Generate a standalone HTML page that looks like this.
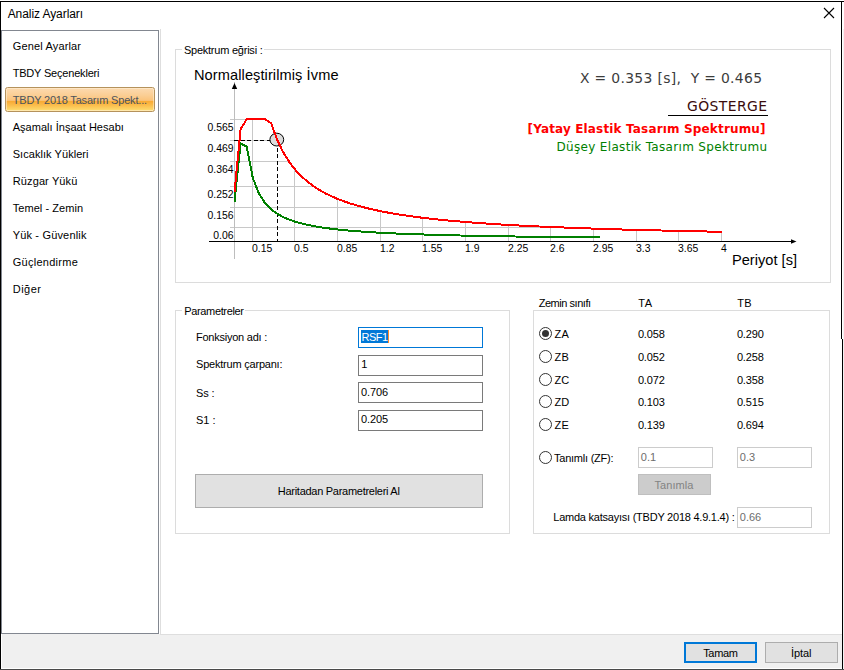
<!DOCTYPE html>
<html lang="tr">
<head>
<meta charset="utf-8">
<title>Analiz Ayarları</title>
<style>
html,body{margin:0;padding:0;}
body{width:844px;height:670px;overflow:hidden;background:#fff;position:relative;font-family:"Liberation Sans",Arial,sans-serif;font-size:11px;color:#000;}
.abs,.t,.sel,.radio,.inp,.btn,.gb,.gbt,.chart{position:absolute;box-sizing:border-box;}
.chart{left:0;top:0;}
.t{white-space:nowrap;line-height:14px;height:14px;font-size:11px;}
.gb{border:1px solid #dcdcdc;}
.gbt{background:#fff;height:14px;}
.sel{border:1px solid #b5925c;border-radius:2.5px;background:linear-gradient(#fcdab0 0%,#fbcf96 30%,#fbc37a 54%,#f9a932 57%,#fbbd4c 75%,#fdd566 92%,#ffe182 100%);box-shadow:inset 0 0 0 1px rgba(255,240,215,0.55);}
.inp{background:#fff;border:1px solid #7a7a7a;height:21px;}
.inp.dis{border-color:#cccccc;}
.btn{background:#e1e1e1;border:1px solid #adadad;}
.radio{left:539px;width:13px;height:13px;border:1px solid #333;border-radius:50%;background:#fff;}
.radio.on::after{content:"";position:absolute;left:2px;top:2px;width:7px;height:7px;border-radius:50%;background:#333;}
</style>
</head>
<body>
<!-- window frame -->
<div class="abs" style="left:0;top:1px;width:844px;height:1px;background:#000"></div>
<div class="abs" style="left:0;top:2px;width:1px;height:668px;background:#000"></div>
<div class="abs" style="left:841px;top:1px;width:1px;height:338px;background:#000"></div>
<div class="abs" style="left:842px;top:339px;width:1px;height:330px;background:#000"></div>
<div class="abs" style="left:843px;top:29px;width:1px;height:641px;background:#f2f2f2"></div>
<!-- bottom strip -->
<div class="abs" style="left:2px;top:634px;width:840px;height:34px;background:#f0f0f0"></div>
<div class="abs" style="left:1px;top:668px;width:841px;height:1px;background:#fff"></div>
<div class="abs" style="left:0;top:669px;width:844px;height:1px;background:#4a4a4a"></div>
<!-- title -->
<div class="t" style="left:7.7px;top:6.8px;font-size:12px;letter-spacing:-0.079px;">Analiz Ayarları</div>
<svg class="abs" style="left:823px;top:7px" width="12" height="12" viewBox="0 0 12 12"><path d="M1 1 L11 11 M11 1 L1 11" stroke="#000" stroke-width="1.1" fill="none"/></svg>
<!-- content panel faint border -->
<div class="abs" style="left:160px;top:29px;width:1px;height:606px;background:#dedede"></div>
<div class="abs" style="left:160px;top:634px;width:682px;height:1px;background:#dedede"></div>
<!-- list -->
<div class="abs" style="left:1px;top:30px;width:158px;height:604px;border:1px solid #828790;background:#fff"></div>
<div class="t" style="left:12.7px;top:38.8px;font-size:11px;letter-spacing:0.158px;">Genel Ayarlar</div>
<div class="t" style="left:12.7px;top:65.8px;font-size:11px;letter-spacing:-0.192px;">TBDY Seçenekleri</div>
<div class="sel" style="left:5px;top:87px;width:150px;height:25px"></div>
<div class="t" style="left:12.7px;top:92.8px;font-size:11px;letter-spacing:-0.184px;color:#4c535c;">TBDY 2018 Tasarım Spekt...</div>
<div class="t" style="left:12.7px;top:119.8px;font-size:11px;letter-spacing:0.025px;">Aşamalı İnşaat Hesabı</div>
<div class="t" style="left:12.7px;top:146.8px;font-size:11px;letter-spacing:0.057px;">Sıcaklık Yükleri</div>
<div class="t" style="left:12.7px;top:173.8px;font-size:11px;letter-spacing:0.128px;">Rüzgar Yükü</div>
<div class="t" style="left:12.7px;top:200.8px;font-size:11px;letter-spacing:0.063px;">Temel - Zemin</div>
<div class="t" style="left:12.7px;top:227.8px;font-size:11px;letter-spacing:0.169px;">Yük - Güvenlik</div>
<div class="t" style="left:12.7px;top:254.8px;font-size:11px;letter-spacing:0.276px;">Güçlendirme</div>
<div class="t" style="left:12.7px;top:281.8px;font-size:11px;letter-spacing:0.503px;">Diğer</div>
<!-- group: spektrum -->
<div class="gb" style="left:175px;top:49px;width:656px;height:234px"></div>
<div class="gbt" style="left:182px;top:42px;width:82px"></div>
<div class="t" style="left:183.9px;top:42.5px;font-size:11px;letter-spacing:-0.231px;">Spektrum eğrisi :</div>
<svg class="chart" width="844" height="670" viewBox="0 0 844 670">
<g stroke="#c8c8c8" stroke-width="1" shape-rendering="crispEdges"><line x1="252.5" y1="241" x2="252.5" y2="119.2"/><line x1="294.5" y1="241" x2="294.5" y2="170.1"/><line x1="337.5" y1="241" x2="337.5" y2="199.1"/><line x1="380.5" y1="241" x2="380.5" y2="211.2"/><line x1="422.5" y1="241" x2="422.5" y2="217.9"/><line x1="465.5" y1="241" x2="465.5" y2="222.0"/><line x1="508.5" y1="241" x2="508.5" y2="224.9"/><line x1="550.5" y1="241" x2="550.5" y2="227.0"/><line x1="593.5" y1="241" x2="593.5" y2="228.6"/><line x1="636.5" y1="241" x2="636.5" y2="229.9"/><line x1="678.5" y1="241" x2="678.5" y2="230.9"/><line x1="721.5" y1="241" x2="721.5" y2="231.8"/><line x1="230" y1="119.5" x2="265.0" y2="119.5"/><line x1="230" y1="140.5" x2="277.1" y2="140.5"/><line x1="230" y1="161.5" x2="289.4" y2="161.5"/><line x1="230" y1="186.5" x2="313.8" y2="186.5"/><line x1="230" y1="207.5" x2="362.7" y2="207.5"/><line x1="230" y1="227.5" x2="567.7" y2="227.5"/></g>
<line x1="234.5" y1="82" x2="234.5" y2="259" stroke="#bdbdbd" stroke-width="1" shape-rendering="crispEdges"/>
<path d="M234.5 83 L237.2 89 L231.8 89 Z" fill="#000"/>
<line x1="209" y1="241.5" x2="795" y2="241.5" stroke="#000" stroke-width="1" shape-rendering="crispEdges"/>
<path d="M796.5 241.5 L791 239.3 L791 243.7 Z" fill="#000"/>
<g stroke="#000" stroke-width="1" stroke-dasharray="4 2.5" shape-rendering="crispEdges"><line x1="234" y1="140.5" x2="270.5" y2="140.5"/><line x1="277.5" y1="147.6" x2="277.5" y2="241"/></g>
<ellipse cx="276.8" cy="139.6" rx="6.9" ry="6.4" fill="#dcdcdc" stroke="#000" stroke-width="1"/>
<polyline points="234.5,201.7 240.6,143.5 246.7,146.6 252.8,177.9 258.9,193.6 265.0,203.0 271.1,209.3 277.2,213.7 283.3,217.1 289.4,219.7 295.5,221.8 301.6,223.5 307.7,224.9 313.7,226.1 319.8,227.2 325.9,228.1 332.0,228.8 338.1,229.5 344.2,230.2 350.3,230.7 356.4,231.2 362.5,231.6 368.6,232.1 374.7,232.4 380.8,232.8 386.9,233.1 393.0,233.4 399.1,233.6 405.2,233.9 411.3,234.1 417.4,234.3 423.5,234.5 429.6,234.7 435.7,234.9 441.8,235.1 447.9,235.2 454.0,235.4 460.1,235.5 466.1,235.7 472.2,235.8 478.3,235.9 484.4,236.0 490.5,236.1 496.6,236.2 502.7,236.3 508.8,236.4 514.9,236.5 521.0,236.6 527.1,236.7 533.2,236.8 539.3,236.8 545.4,236.9 551.5,237.0 557.6,237.1 563.7,237.1 569.8,237.2 575.9,237.2 582.0,237.3 588.1,237.4 594.2,237.4 600.3,237.5" fill="none" stroke="#008000" stroke-width="2" stroke-linejoin="round" shape-rendering="crispEdges"/>
<polyline points="234.5,192.0 240.6,129.3 246.7,119.2 252.8,119.2 258.9,119.2 265.0,119.2 271.1,123.1 277.2,139.9 283.3,152.4 289.4,162.2 295.5,170.1 301.6,176.5 307.7,181.8 313.7,186.4 319.8,190.2 325.9,193.6 332.0,196.5 338.1,199.1 344.2,201.4 350.3,203.5 356.4,205.3 362.5,207.0 368.6,208.5 374.7,209.9 380.8,211.2 386.9,212.4 393.0,213.5 399.1,214.5 405.2,215.4 411.3,216.3 417.4,217.1 423.5,217.9 429.6,218.6 435.7,219.2 441.8,219.9 447.9,220.5 454.0,221.0 460.1,221.5 466.1,222.0 472.2,222.5 478.3,223.0 484.4,223.4 490.5,223.8 496.6,224.2 502.7,224.6 508.8,224.9 514.9,225.3 521.0,225.6 527.1,225.9 533.2,226.2 539.3,226.5 545.4,226.8 551.5,227.0 557.6,227.3 563.7,227.5 569.8,227.8 575.9,228.0 582.0,228.2 588.1,228.4 594.2,228.6 600.3,228.8 606.4,229.0 612.5,229.2 618.5,229.4 624.6,229.6 630.7,229.8 636.8,229.9 642.9,230.1 649.0,230.2 655.1,230.4 661.2,230.5 667.3,230.7 673.4,230.8 679.5,230.9 685.6,231.1 691.7,231.2 697.8,231.3 703.9,231.4 710.0,231.6 716.1,231.7 722.2,231.8" fill="none" stroke="#ff0000" stroke-width="2" stroke-linejoin="round" shape-rendering="crispEdges"/>
<g font-family="'Liberation Sans', Arial, sans-serif" font-size="10.4" fill="#000"><text x="233.5" y="130.6" text-anchor="end">0.565</text><text x="233.5" y="151.6" text-anchor="end">0.469</text><text x="233.5" y="172.6" text-anchor="end">0.364</text><text x="233.5" y="197.6" text-anchor="end">0.252</text><text x="233.5" y="218.6" text-anchor="end">0.156</text><text x="233.5" y="238.6" text-anchor="end">0.06</text><text x="252.0" y="251.5">0.15</text><text x="294.0" y="251.5">0.5</text><text x="337.0" y="251.5">0.85</text><text x="380.0" y="251.5">1.2</text><text x="422.0" y="251.5">1.55</text><text x="465.0" y="251.5">1.9</text><text x="508.0" y="251.5">2.25</text><text x="550.0" y="251.5">2.6</text><text x="593.0" y="251.5">2.95</text><text x="636.0" y="251.5">3.3</text><text x="678.0" y="251.5">3.65</text><text x="721.0" y="251.5">4</text></g>
<text x="194" y="80" font-family="'Liberation Sans', Arial, sans-serif" font-size="14.6" fill="#000" textLength="144.5" lengthAdjust="spacing">Normalleştirilmiş İvme</text>
<text x="732" y="265" font-family="'Liberation Sans', Arial, sans-serif" font-size="14.6" fill="#000" textLength="65" lengthAdjust="spacing">Periyot [s]</text>
<text x="580" y="83" font-family="'DejaVu Sans', Verdana, sans-serif" font-size="13.9" fill="#3c3c3c" xml:space="preserve" style="white-space:pre" textLength="182" lengthAdjust="spacing">X = 0.353 [s],  Y = 0.465</text>
<text x="687" y="111" font-family="'DejaVu Sans', Verdana, sans-serif" font-size="13.9" fill="#3a0c0c" textLength="80" lengthAdjust="spacing">GÖSTERGE</text>
<line x1="668" y1="115.5" x2="768" y2="115.5" stroke="#000" stroke-width="1" shape-rendering="crispEdges"/>
<text x="527.5" y="133" font-family="'DejaVu Sans', Verdana, sans-serif" font-weight="bold" font-size="12" fill="#ff0000" textLength="238" lengthAdjust="spacing">[Yatay Elastik Tasarım Spektrumu]</text>
<text x="556.5" y="151" font-family="'DejaVu Sans', Verdana, sans-serif" font-size="12" fill="#008000" textLength="210.5" lengthAdjust="spacing">Düşey Elastik Tasarım Spektrumu</text>
</svg>
<!-- group: parametreler -->
<div class="gb" style="left:175px;top:310px;width:335px;height:224px"></div>
<div class="gbt" style="left:182px;top:303px;width:63px"></div>
<div class="t" style="left:184.3px;top:303.5px;font-size:11px;letter-spacing:-0.357px;">Parametreler</div>
<div class="t" style="left:196.0px;top:329.7px;font-size:11px;letter-spacing:-0.240px;">Fonksiyon adı :</div>
<div class="t" style="left:196.0px;top:357.0px;font-size:11px;letter-spacing:-0.210px;">Spektrum çarpanı:</div>
<div class="t" style="left:196.0px;top:385.5px;font-size:11px;letter-spacing:-0.137px;">Ss :</div>
<div class="t" style="left:196.0px;top:413.0px;font-size:11px;letter-spacing:-0.042px;">S1 :</div>
<div class="inp" style="left:358px;top:327px;width:125px;height:21px;border-color:#0078d7"></div>
<div class="abs" style="left:361px;top:330px;width:27px;height:13px;background:#0078d7"></div>
<div class="abs" style="left:388px;top:330px;width:1px;height:13px;background:#ff8a2a"></div>
<div class="t" style="left:361.5px;top:329.7px;font-size:11px;letter-spacing:-0.529px;color:#fff;">RSF1</div>
<div class="inp" style="left:358px;top:355px;width:125px"></div>
<div class="t" style="left:361.3px;top:357.0px;font-size:11px;">1</div>
<div class="inp" style="left:358px;top:382px;width:125px"></div>
<div class="t" style="left:361.1px;top:384.5px;font-size:11px;letter-spacing:-0.105px;">0.706</div>
<div class="inp" style="left:358px;top:410px;width:125px"></div>
<div class="t" style="left:361.1px;top:412.0px;font-size:11px;letter-spacing:-0.105px;">0.205</div>
<div class="btn" style="left:195px;top:474px;width:288px;height:34px"></div>
<div class="t" style="left:277.8px;top:484.0px;font-size:11px;letter-spacing:-0.277px;">Haritadan Parametreleri Al</div>
<!-- group: zemin -->
<div class="t" style="left:538.7px;top:295.9px;font-size:11px;letter-spacing:-0.463px;">Zemin sınıfı</div>
<div class="t" style="left:638.3px;top:295.9px;font-size:11px;letter-spacing:0.630px;">TA</div>
<div class="t" style="left:737.3px;top:295.9px;font-size:11px;letter-spacing:0.222px;">TB</div>
<div class="gb" style="left:533px;top:310px;width:297px;height:224px"></div>
<div class="radio on" style="top:327.0px"></div>
<div class="t" style="left:554.5px;top:326.5px;font-size:11px;letter-spacing:0.372px;">ZA</div>
<div class="t" style="left:637.9px;top:326.5px;font-size:11px;letter-spacing:-0.145px;">0.058</div>
<div class="t" style="left:736.9px;top:326.5px;font-size:11px;letter-spacing:-0.145px;">0.290</div>
<div class="radio" style="top:350.0px"></div>
<div class="t" style="left:554.5px;top:349.5px;font-size:11px;letter-spacing:0.372px;">ZB</div>
<div class="t" style="left:637.9px;top:349.5px;font-size:11px;letter-spacing:-0.145px;">0.052</div>
<div class="t" style="left:736.9px;top:349.5px;font-size:11px;letter-spacing:-0.145px;">0.258</div>
<div class="radio" style="top:373.0px"></div>
<div class="t" style="left:554.5px;top:372.5px;font-size:11px;letter-spacing:0.068px;">ZC</div>
<div class="t" style="left:637.9px;top:372.5px;font-size:11px;letter-spacing:-0.145px;">0.072</div>
<div class="t" style="left:736.9px;top:372.5px;font-size:11px;letter-spacing:-0.145px;">0.358</div>
<div class="radio" style="top:395.0px"></div>
<div class="t" style="left:554.5px;top:394.5px;font-size:11px;letter-spacing:0.068px;">ZD</div>
<div class="t" style="left:637.9px;top:394.5px;font-size:11px;letter-spacing:-0.145px;">0.103</div>
<div class="t" style="left:736.9px;top:394.5px;font-size:11px;letter-spacing:-0.145px;">0.515</div>
<div class="radio" style="top:418.0px"></div>
<div class="t" style="left:554.5px;top:417.5px;font-size:11px;letter-spacing:0.372px;">ZE</div>
<div class="t" style="left:637.9px;top:417.5px;font-size:11px;letter-spacing:-0.145px;">0.139</div>
<div class="t" style="left:736.9px;top:417.5px;font-size:11px;letter-spacing:-0.145px;">0.694</div>
<div class="radio" style="top:451px"></div>
<div class="t" style="left:554.0px;top:450.5px;font-size:11px;letter-spacing:-0.233px;">Tanımlı (ZF):</div>
<div class="inp dis" style="left:638px;top:447px;width:75px"></div>
<div class="t" style="left:640.8px;top:450.0px;font-size:11px;color:#6d6d6d;">0.1</div>
<div class="inp dis" style="left:737px;top:447px;width:75px"></div>
<div class="t" style="left:739.8px;top:450.0px;font-size:11px;color:#6d6d6d;">0.3</div>
<div class="btn" style="left:638px;top:474px;width:73px;height:21px;background:#cccccc;border-color:#bfbfbf"></div>
<div class="t" style="left:654.6px;top:477.5px;font-size:11px;letter-spacing:0.026px;color:#838383;">Tanımla</div>
<div class="t" style="left:553.3px;top:509.5px;font-size:11px;letter-spacing:-0.236px;">Lamda katsayısı (TBDY 2018 4.9.1.4) :</div>
<div class="inp dis" style="left:737px;top:507px;width:75px"></div>
<div class="t" style="left:739.8px;top:510.0px;font-size:11px;color:#6d6d6d;">0.66</div>
<!-- bottom buttons -->
<div class="btn" style="left:684px;top:642px;width:73px;height:21px;border:2px solid #0078d7"></div>
<div class="t" style="left:703.2px;top:645.6px;font-size:11px;letter-spacing:-0.332px;">Tamam</div>
<div class="btn" style="left:765px;top:642px;width:73px;height:21px"></div>
<div class="t" style="left:790.9px;top:645.6px;font-size:11px;letter-spacing:-0.038px;">İptal</div>
</body>
</html>
